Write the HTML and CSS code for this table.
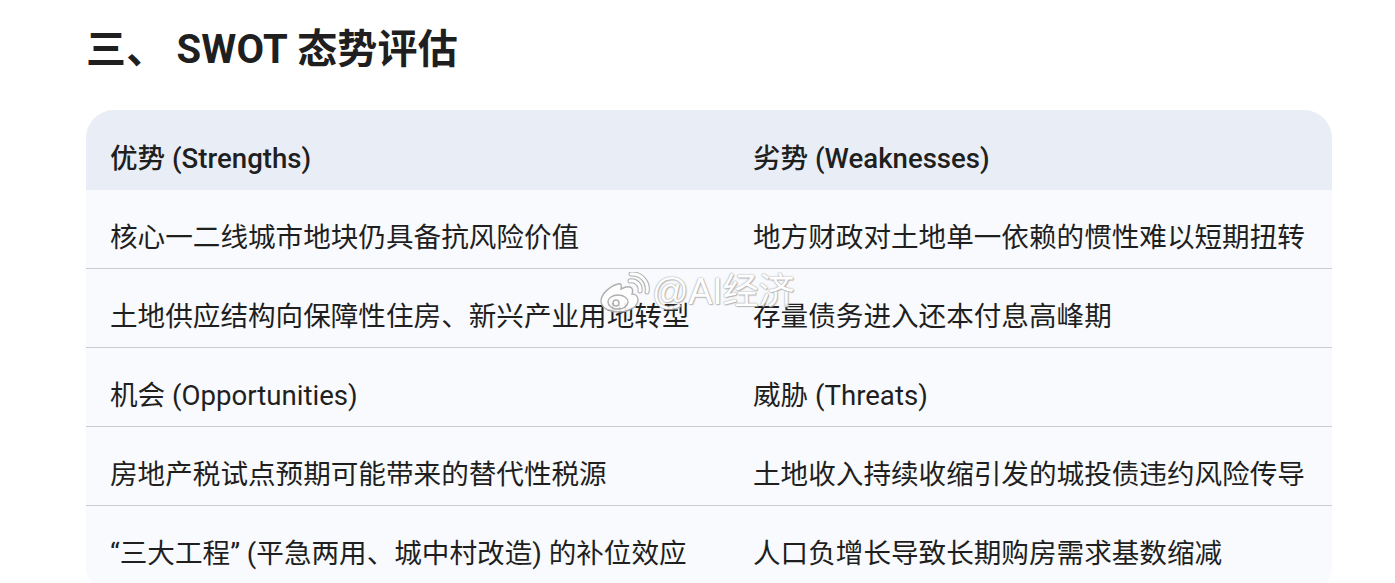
FILE: index.html
```html
<!DOCTYPE html>
<html lang="zh-CN">
<head>
<meta charset="utf-8">
<title>SWOT 态势评估</title>
<link rel="stylesheet" href="styles.css">
</head>
<body>
<main class="page">
  <h2 class="title">三、 SWOT 态势评估</h2>
  <div class="swot">
    <div class="cell head">优势 (Strengths)</div>
    <div class="cell head">劣势 (Weaknesses)</div>
    <div class="cell">核心一二线城市地块仍具备抗风险价值</div>
    <div class="cell">地方财政对土地单一依赖的惯性难以短期扭转</div>
    <div class="cell">土地供应结构向保障性住房、新兴产业用地转型</div>
    <div class="cell">存量债务进入还本付息高峰期</div>
    <div class="cell">机会 (Opportunities)</div>
    <div class="cell">威胁 (Threats)</div>
    <div class="cell">房地产税试点预期可能带来的替代性税源</div>
    <div class="cell">土地收入持续收缩引发的城投债违约风险传导</div>
    <div class="cell last">“三大工程” (平急两用、城中村改造) 的补位效应</div>
    <div class="cell last">人口负增长导致长期购房需求基数缩减</div>
  </div>
  <div class="watermark" aria-hidden="true">
    <svg class="wb" width="52" height="42" viewBox="0 0 52 42">
      <g fill="#fff" stroke="#a8a8a8" stroke-width="1.4">
        <path d="M20 12 C12 14 3 22 3 29 C3 36 11 40 21 40 C32 40 40 34 40 28 C40 24 37 22 34 22 C35 19 35 16 32 15 C29 14 25 16 23 17 C24 13 23 11 20 12 Z"/>
        <ellipse cx="20" cy="30" rx="10" ry="7"/>
        <circle cx="18" cy="31" r="3"/>
        <path d="M32 9 C38 8 43 13 42 19" fill="none" stroke-width="5" stroke="#a8a8a8" stroke-linecap="round"/>
        <path d="M32 9 C38 8 43 13 42 19" fill="none" stroke-width="3" stroke="#fff" stroke-linecap="round"/>
        <path d="M33 2 C43 1 51 10 49 20" fill="none" stroke-width="5" stroke="#a8a8a8" stroke-linecap="round"/>
        <path d="M33 2 C43 1 51 10 49 20" fill="none" stroke-width="3" stroke="#fff" stroke-linecap="round"/>
      </g>
    </svg>
    <span class="wm-text">@AI经济</span>
  </div>
</main>
</body>
</html>
```

FILE: styles.css
```css
html, body {
  margin: 0;
  padding: 0;
  background: #ffffff;
  overflow: hidden;
}

body {
  font-family: "Roboto", "Noto Sans CJK SC", sans-serif;
  color: #1f1f1f;
}

.page {
  position: relative;
  padding: 26px 63px 0 86px;
}

.title {
  margin: 0;
  font-size: 40px;
  line-height: 48px;
  font-weight: 700;
  letter-spacing: 0.2px;
  color: #1f1f1f;
}

.swot {
  margin-top: 36px;
  width: 1246px;
  display: grid;
  grid-template-columns: 643px 1fr;
  border-radius: 28px;
  overflow: hidden;
  background: #f8fafd;
}

.cell {
  font-size: 27.6px;
  line-height: 32px;
  padding: 32px 24px 14px 24px;
  height: 32px;
  border-bottom: 1px solid #c9ccd1;
  white-space: nowrap;
}

.cell.head {
  background: #e9eef6;
  font-weight: 500;
  padding-top: 33px;
  padding-bottom: 15px;
  border-bottom: none;
}

.cell.last {
  border-bottom: none;
  padding-bottom: 24px;
}

.watermark {
  position: absolute;
  left: 598px;
  top: 272px;
  display: flex;
  align-items: flex-start;
  gap: 2px;
  pointer-events: none;
  opacity: 0.9;
}

.wm-text {
  font-family: "Liberation Sans", "Noto Sans CJK SC", sans-serif;
  font-size: 36px;
  line-height: 40px;
  margin-top: 0;
  color: #ffffff;
  text-shadow: 0 0 1px #9a9a9a, 0 0 2px #b0b0b0, 1px 1px 1px #b5b5b5;
}
```
